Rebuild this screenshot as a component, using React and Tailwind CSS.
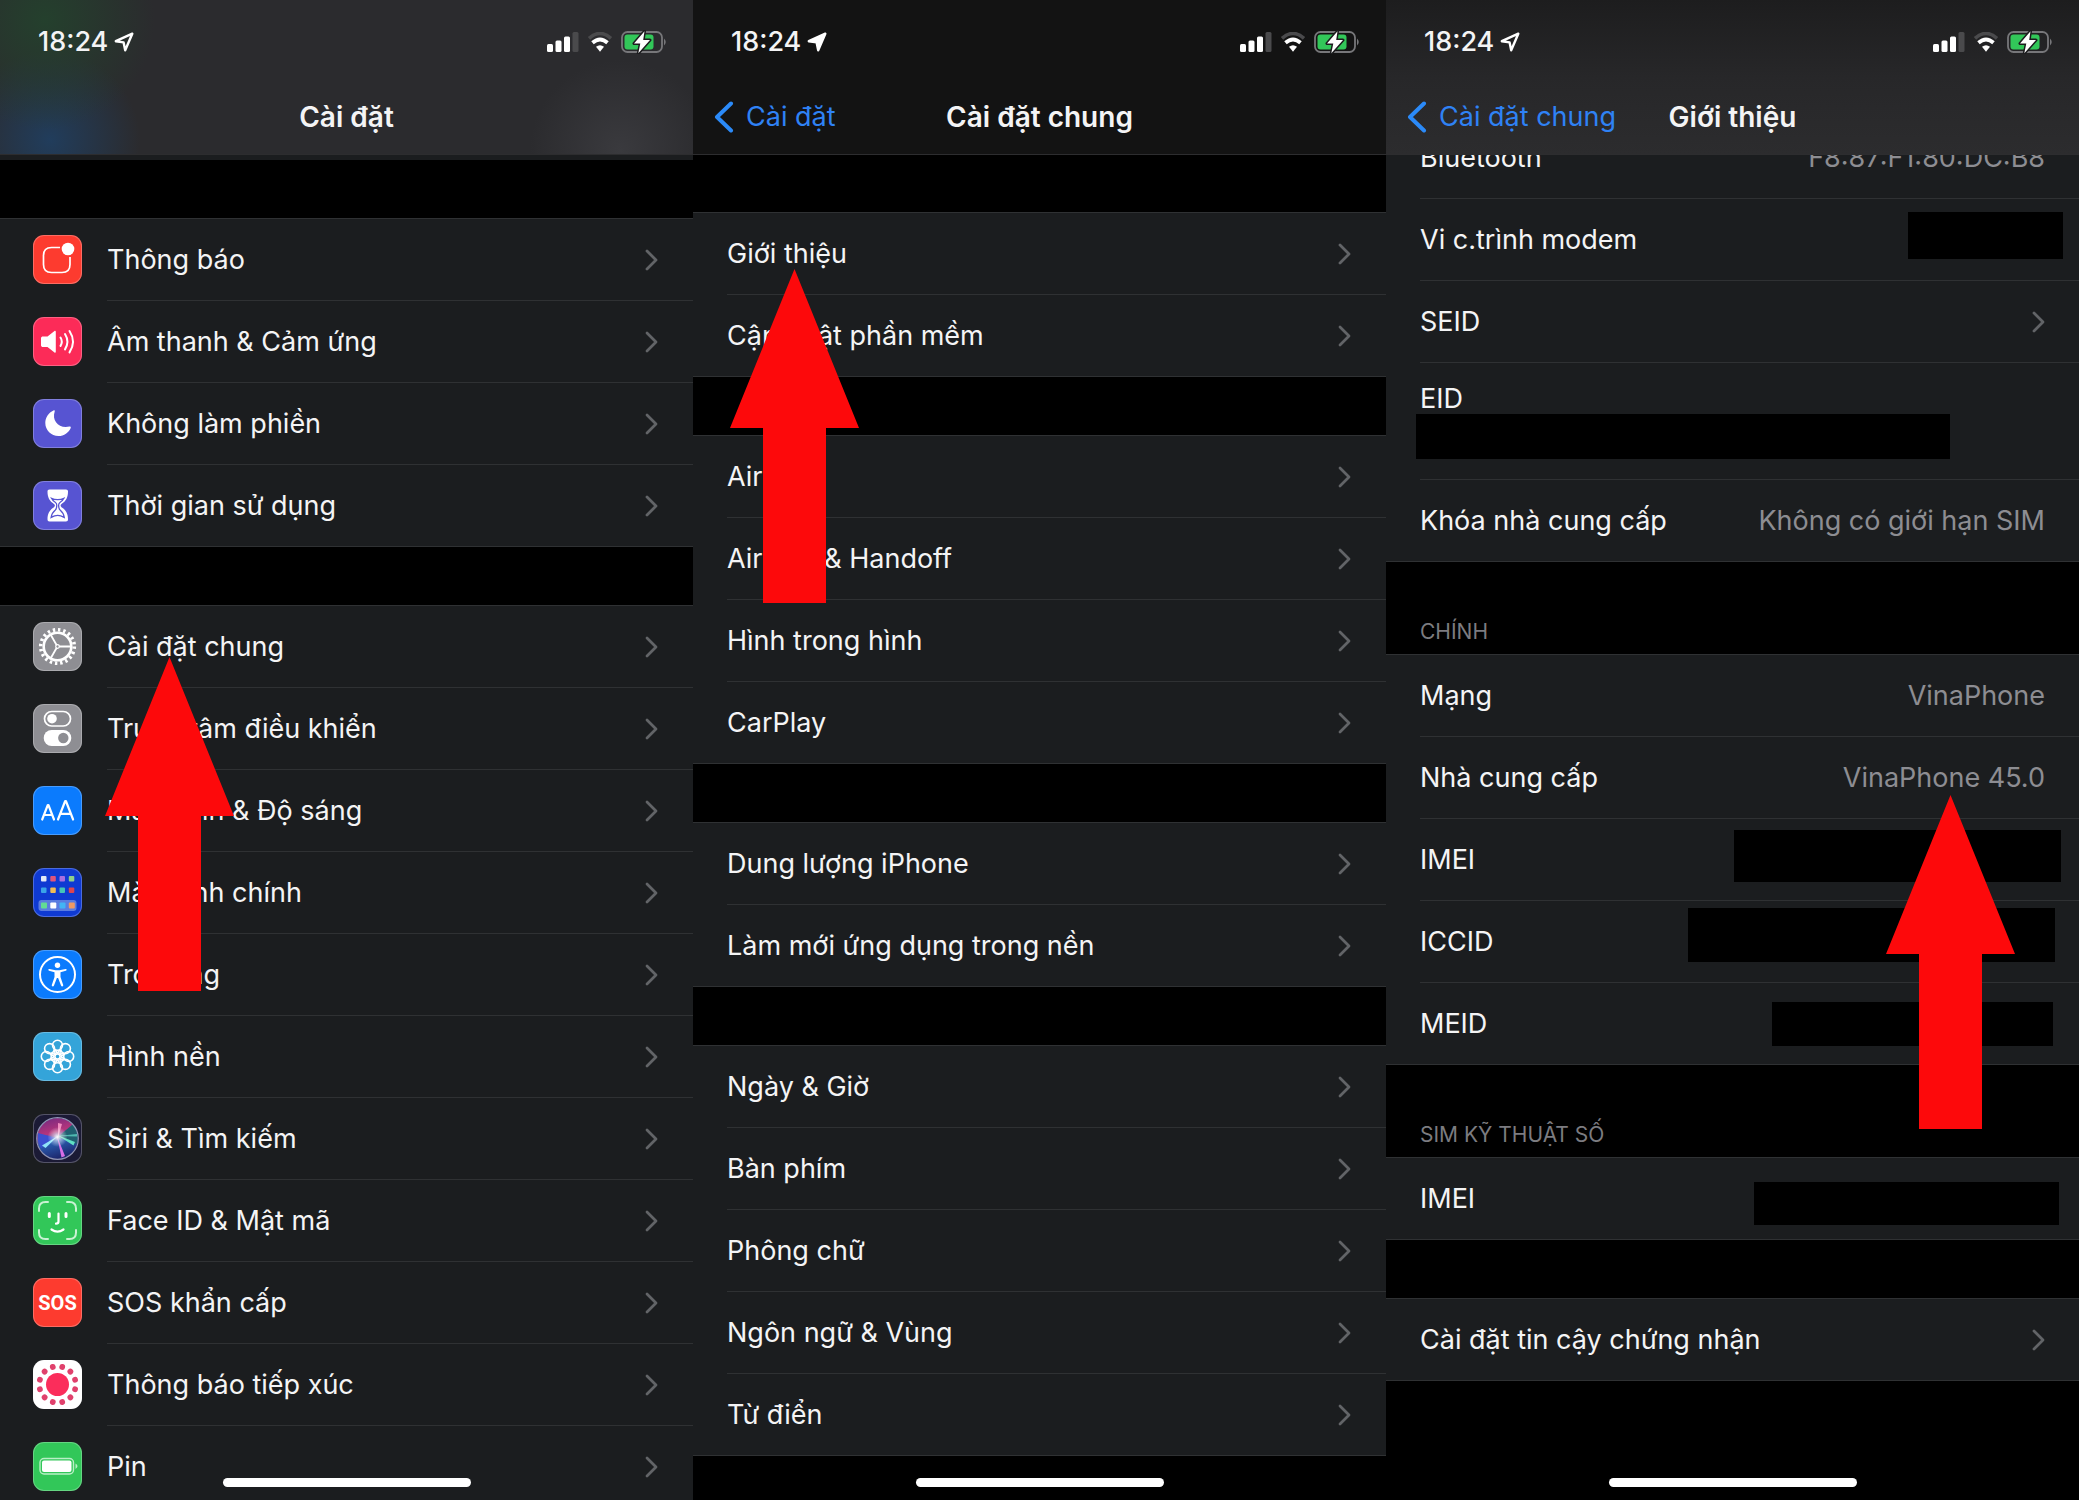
import clsx from "clsx";

const APP_ICONS = {
  notifications: {
    bg: "bg-[#fd3b2f]",
    art: (
      <>
        <path
          d="M27 12.5H18.500c-5 0-8 3-8 8v9c0 5 3 8 8 8h10.500c5 0 8-3 8-8V22"
          fill="none"
          stroke="#fff"
          strokeWidth="1.700"
        />
        <circle cx="35" cy="14" r="6.300" fill="#fff" />
      </>
    ),
  },
  sounds: {
    bg: "bg-[#fc2b58]",
    art: (
      <>
        <path
          d="M10 19.500h4.500L21.500 14c.6-.5 1.300-.2 1.300.7v20c0 .9-.7 1.200-1.300.7L14.500 30H10c-1.200 0-2-.7-2-1.800v-7c0-1.100.8-1.700 2-1.700z"
          fill="#fff"
        />
        <path
          d="M27.500 20.500q2.600 4.200 0 8.400M32 17q4.800 7.700 0 15.400M36.500 14q7 10.700 0 21.400"
          fill="none"
          stroke="#fff"
          strokeWidth="2"
          strokeLinecap="round"
        />
      </>
    ),
  },
  moon: {
    bg: "bg-[#5754d2]",
    art: (
      <path
        d="M20.500 11.500c.8-.4 1.500.1 1.200 1-3.200 9.500 4.500 17.500 14.800 15 .9-.2 1.600.5 1.200 1.400C35.700 33.500 31 37 25.500 37 18.200 37 12.300 31.200 12.300 24c0-5.400 3.300-10.300 8.200-12.500z"
        fill="#fff"
      />
    ),
  },
  hourglass: {
    bg: "bg-[#5754d2]",
    art: (
      <>
        <path
          d="M16.500 8.500h16.500c1.300 0 2 .7 2 2 0 6-2 9.500-6.500 12.500-1.200.9-1.200 2.300 0 3.200C33 29 35 32.500 35 38.500c0 1.300-.7 2-2 2H16.500c-1.300 0-2-.7-2-2 0-6 2-9.500 6.500-12.300 1.200-.9 1.200-2.300 0-3.200-4.500-3-6.500-6.500-6.500-12.500 0-1.300.7-2 2-2z"
          fill="#fff"
        />
        <path
          d="M18.500 17.300c2 1 3.800 1.300 6.200 1.300s4.200-.3 6.200-1.300c-.8 1.800-2.400 3.200-4 4.200-1.100.7-1.300 1.500-1.300 3 0 2.500.4 3.500 1.500 4.500 2 1.700 3.600 3.400 4.200 7.500-2-1.200-3.600-2.200-6.600-2.200s-4.600 1-6.600 2.200c.6-4.100 2.200-5.800 4.200-7.500 1.100-1 1.500-2 1.500-4.500 0-1.500-.2-2.300-1.300-3-1.600-1-3.200-2.400-4-4.200z"
          fill="none"
          stroke="#5754d2"
          strokeWidth="1.300"
        />
      </>
    ),
  },
  gear: {
    bg: "bg-[#8e8e93]",
    art: (
      <g fill="none" stroke="#fff">
        <circle cx="24.500" cy="24.500" r="13.800" strokeWidth="2.600" />
        <circle
          cx="24.500"
          cy="24.500"
          r="16.800"
          strokeWidth="3.600"
          strokeDasharray="2.400 2.878"
        />
        <path
          d="M26 24.500h12M23.700 23.200l-6-10.400M23.700 25.800l-6 10.400"
          strokeWidth="1.800"
        />
        <circle cx="24.500" cy="24.500" r="1.800" strokeWidth="1.200" />
      </g>
    ),
  },
  toggles: {
    bg: "bg-[#8e8e93]",
    art: (
      <>
        <rect
          x="11.500"
          y="7.500"
          width="26"
          height="14.500"
          rx="7.250"
          fill="none"
          stroke="#fff"
          strokeWidth="1.700"
        />
        <circle cx="19" cy="14.700" r="4.800" fill="#fff" />
        <rect x="10.700" y="26" width="27.600" height="16" rx="8" fill="#fff" />
        <circle cx="30.300" cy="34" r="5.200" fill="#8e8e93" />
      </>
    ),
  },
  display: {
    bg: "bg-[#0b7bfd]",
    art: (
      <g
        fill="none"
        stroke="#fff"
        strokeWidth="2.200"
        strokeLinecap="round"
        strokeLinejoin="round"
      >
        <path d="M9.200 33.500l5.600-14.500h.6l5.600 14.500M11 29h8" />
        <path d="M25 33.500l7.200-18.500h.7l7.200 18.500M27.500 27.800h10" />
      </g>
    ),
  },
  home: {
    bg: "bg-[#0f3ad2]",
    art: (
      <>
        <rect x="5.500" y="32" width="38" height="11" rx="3" fill="#5a7ce0" />
        <rect x="8" y="8" width="5.500" height="5.500" rx="1" fill="#e3e8f6" />
        <rect x="17.300" y="8" width="5.500" height="5.500" rx="1" fill="#e0557c" />
        <rect x="26.500" y="8" width="5.500" height="5.500" rx="1" fill="#a96ee0" />
        <rect x="35.800" y="8" width="5.500" height="5.500" rx="1" fill="#8fd08a" />
        <rect x="8" y="19.500" width="5.500" height="5.500" rx="1" fill="#3aa4e8" />
        <rect x="17.300" y="19.500" width="5.500" height="5.500" rx="1" fill="#efbc55" />
        <rect x="26.500" y="19.500" width="5.500" height="5.500" rx="1" fill="#43c6b8" />
        <rect x="35.800" y="19.500" width="5.500" height="5.500" rx="1" fill="#dc4550" />
        <rect x="8" y="34.500" width="6" height="6" rx="1" fill="#62dc94" />
        <rect x="17.300" y="34.500" width="6" height="6" rx="1" fill="#fff" />
        <rect x="26.500" y="34.500" width="6" height="6" rx="1" fill="#42b4f4" />
        <rect x="35.800" y="34.500" width="6" height="6" rx="1" fill="#ee9a63" />
      </>
    ),
  },
  accessibility: {
    bg: "bg-[#0b7bfd]",
    art: (
      <>
        <circle
          cx="24.500"
          cy="24.500"
          r="17.500"
          fill="none"
          stroke="#fff"
          strokeWidth="2"
        />
        <circle cx="24.500" cy="15.200" r="2.700" fill="#fff" />
        <path
          d="M16.500 19l6 1.300h4l6-1.300c1.500-.2 1.700 1.400.4 1.800l-5.400 1.500v4.700l2.700 8c.4 1.400-1.500 2-2.100.7l-3-7.700h-1.200l-3 7.700c-.6 1.300-2.500.7-2.100-.7l2.700-8v-4.700l-5.400-1.500c-1.300-.4-1.100-2 .4-1.800z"
          fill="#fff"
        />
      </>
    ),
  },
  wallpaper: {
    bg: "bg-[#34a4d9]",
    art: (
      <g fill="none" stroke="#fff" strokeWidth="1.600">
        {[0, 45, 90, 135, 180, 225, 270, 315].map((deg) => (
          <g key={deg} transform={`rotate(${deg} 24.500 24.500)`}>
            <circle cx="24.500" cy="13.300" r="5" />
            <path d="M24.500 21.500l-2.400-4M24.500 21.500l2.400-4" />
          </g>
        ))}
        <circle cx="24.500" cy="24.500" r="2.600" />
      </g>
    ),
  },
  siri: {
    bg: "bg-[#1b1a35]",
    art: (
      <>
        <defs>
          <linearGradient id="siriOrb" x1="0.3" y1="0" x2="0.6" y2="1">
            <stop offset="0" stopColor="#7a2a80" />
            <stop offset="0.35" stopColor="#b5357c" />
            <stop offset="0.55" stopColor="#2b5fb4" />
            <stop offset="1" stopColor="#1b2266" />
          </linearGradient>
          <radialGradient id="siriCore">
            <stop offset="0" stopColor="#fff" />
            <stop offset="0.4" stopColor="#fff" stopOpacity="0.5" />
            <stop offset="1" stopColor="#fff" stopOpacity="0" />
          </radialGradient>
        </defs>
        <circle cx="24.500" cy="24.500" r="20.500" fill="url(#siriOrb)" />
        <path d="M25 23l15-13a21 21 0 0 1 4 20z" fill="#1f5f70" />
        <path d="M24 24L5 19a20 20 0 0 0 3 15z" fill="#3b4fd0" />
        <path d="M25 22L9 31.500l3.500 2.500z" fill="#8fe4f8" />
        <path d="M24 21l18 7-1.500 3.500z" fill="#5fe0c4" />
        <path d="M24 22l20-2v2.500z" fill="#4fb8b0" />
        <path d="M24 22l4.500 21.500 3.500-1.500z" fill="#d76ee6" />
        <path d="M25 24L25 9l4 1z" fill="#f08cc0" />
        <circle cx="24.500" cy="23" r="10" fill="url(#siriCore)" />
        <circle
          cx="24.500"
          cy="24.500"
          r="20.800"
          fill="none"
          stroke="#8f93b4"
          strokeWidth="1.200"
        />
      </>
    ),
  },
  faceid: {
    bg: "bg-[#32c759]",
    art: (
      <g fill="none" stroke="#fff" strokeLinecap="round" strokeWidth="2.200">
        <path
          d="M6 15v-2.500C6 8.500 8.500 6 12.500 6H15M34 6h2.500C40.500 6 43 8.500 43 12.500V15M43 34v2.500c0 4-2.500 6.500-6.500 6.500H34M15 43h-2.500C8.500 43 6 40.500 6 36.500V34"
          stroke="#c9f2d3"
          strokeWidth="2"
        />
        <path d="M16.300 17.500v3M33 17.500v3" strokeWidth="3" />
        <path d="M25.500 17.500v8c0 1.500-.8 2.200-2.500 2.200M18.500 33.500q6 4.400 12 0" />
      </g>
    ),
  },
  sos: {
    bg: "bg-[#fd3b2f]",
    art: (
      <text
        x="24.500"
        y="32"
        textAnchor="middle"
        fill="#fff"
        fontFamily="'Liberation Sans Narrow', Roboto, sans-serif"
        fontSize="20"
        fontWeight="700"
      >
        SOS
      </text>
    ),
  },
  exposure: {
    bg: "bg-white",
    art: (
      <g fill="#fb2d5b">
        <circle cx="24.500" cy="24.500" r="11.500" />
        {[15, 45, 75, 105, 135, 165, 195, 225, 255, 285, 315, 345].map((deg) => (
          <circle
            key={deg}
            cx="24.500"
            cy="6.300"
            r="2.900"
            fill="#e0416c"
            transform={`rotate(${deg} 24.500 24.500)`}
          />
        ))}
      </g>
    ),
  },
  battery: {
    bg: "bg-[#32c759]",
    art: (
      <>
        <rect
          x="7"
          y="16.500"
          width="33.500"
          height="15.500"
          rx="4"
          fill="none"
          stroke="#b9efc6"
          strokeWidth="1.400"
        />
        <rect x="9" y="18.500" width="29.500" height="11.500" rx="2" fill="#fff" />
        <path d="M42.500 21.500q4 2.700 0 5.400z" fill="#b9efc6" />
      </>
    ),
  },
};

const SETTINGS_GROUPS = [
  [
    { icon: "notifications", label: "Thông báo" },
    { icon: "sounds", label: "Âm thanh & Cảm ứng" },
    { icon: "moon", label: "Không làm phiền" },
    { icon: "hourglass", label: "Thời gian sử dụng" },
  ],
  [
    { icon: "gear", label: "Cài đặt chung" },
    { icon: "toggles", label: "Trung tâm điều khiển" },
    { icon: "display", label: "Màn hình & Độ sáng" },
    { icon: "home", label: "Màn hình chính" },
    { icon: "accessibility", label: "Trợ năng" },
    { icon: "wallpaper", label: "Hình nền" },
    { icon: "siri", label: "Siri & Tìm kiếm" },
    { icon: "faceid", label: "Face ID & Mật mã" },
    { icon: "sos", label: "SOS khẩn cấp" },
    { icon: "exposure", label: "Thông báo tiếp xúc" },
    { icon: "battery", label: "Pin" },
  ],
];

const GENERAL_GROUPS = [
  ["Giới thiệu", "Cập nhật phần mềm"],
  ["AirDrop", "AirPlay & Handoff", "Hình trong hình", "CarPlay"],
  ["Dung lượng iPhone", "Làm mới ứng dụng trong nền"],
  ["Ngày & Giờ", "Bàn phím", "Phông chữ", "Ngôn ngữ & Vùng", "Từ điển"],
];

// mask: size and place of the black box that hides a private value
const ABOUT_ROWS = [
  { label: "Bluetooth", value: "F8:87:F1:80:DC:B8" },
  { label: "Vi c.trình modem", mask: "top-3.5 right-4 h-[47px] w-[155px]" },
  { label: "SEID", link: true },
  { label: "EID", tall: true, mask: "top-[52px] left-[30px] h-[45px] w-[534px]" },
  { label: "Khóa nhà cung cấp", value: "Không có giới hạn SIM" },
];

const MAIN_ROWS = [
  { label: "Mạng", value: "VinaPhone" },
  { label: "Nhà cung cấp", value: "VinaPhone 45.0" },
  { label: "IMEI", mask: "top-3 right-[18px] h-[52px] w-[327px]" },
  { label: "ICCID", mask: "top-2 right-6 h-[54px] w-[367px]" },
  { label: "MEID", mask: "top-5 right-[26px] h-11 w-[281px]" },
];

const ESIM_ROWS = [
  { label: "IMEI", mask: "top-6 right-5 h-[43px] w-[305px]" },
];

function Chevron() {
  return (
    <svg viewBox="0 0 13 22" className="ml-auto h-[22px] w-[13px] shrink-0">
      <path
        d="M2 2l9 9-9 9"
        fill="none"
        stroke="#626467"
        strokeWidth="2.800"
        strokeLinecap="round"
        strokeLinejoin="round"
      />
    </svg>
  );
}

function AppIcon({ name }) {
  const icon = APP_ICONS[name];
  return (
    <span
      className={clsx(
        "size-[49px] shrink-0 overflow-hidden rounded-[11px] ring-1 ring-white/25 ring-inset",
        icon.bg
      )}
    >
      <svg viewBox="0 0 49 49" className="size-full" aria-hidden="true">
        {icon.art}
      </svg>
    </span>
  );
}

function StatusBar({ solid }) {
  return (
    <div className="flex h-[84px] items-center pr-[26px] pl-[38px]">
      <span className="font-medium">18:24</span>
      <svg viewBox="0 0 20 20" className="ml-1.5 size-5" aria-hidden="true">
        <path
          d="M18.300 1.700L1.800 9.200l7.800 1.200 1.600 7.900z"
          fill={solid ? "#fff" : "none"}
          stroke="#fff"
          strokeWidth="2.400"
          strokeLinejoin="round"
        />
      </svg>
      <div className="ml-auto flex items-center gap-2">
        <svg viewBox="0 0 32 20" className="h-5 w-8" aria-hidden="true">
          <rect x="0" y="12" width="6" height="8" rx="1.500" fill="#fff" />
          <rect x="8.500" y="8.500" width="6" height="11.500" rx="1.500" fill="#fff" />
          <rect x="17" y="4.500" width="6" height="15.500" rx="1.500" fill="#fff" />
          <rect x="25.500" y="0" width="6" height="20" rx="1.500" fill="#4a4a4c" />
        </svg>
        <svg viewBox="0 0 26 20" className="h-5 w-[26px]" aria-hidden="true">
          <path
            d="M2 6.300q11-9.600 22 0"
            fill="none"
            stroke="#4a4a4c"
            strokeWidth="3.600"
          />
          <path
            d="M5.500 10.800q7.500-6.500 15 0"
            fill="none"
            stroke="#fff"
            strokeWidth="3.800"
          />
          <path d="M9 14.800q4-3.200 8 0l-4 5z" fill="#fff" />
        </svg>
        <svg viewBox="0 0 46 24" className="h-6 w-[46px]" aria-hidden="true">
          <rect
            x="1"
            y="2"
            width="40"
            height="20"
            rx="5.500"
            fill="none"
            stroke="#77777a"
            strokeWidth="1.800"
          />
          <rect x="3.500" y="4.500" width="29" height="15" rx="3" fill="#32c759" />
          <path d="M43 8.500q3.500 3.500 0 7z" fill="#77777a" />
          <path
            d="M23.500 1.200l-10.500 12.300h6.300l-2 9.800 11.700-13.200h-6.800z"
            fill="#fff"
            stroke="#1c1c1e"
            strokeWidth="3"
            strokeLinejoin="round"
            paintOrder="stroke"
          />
        </svg>
      </div>
    </div>
  );
}

function TopBar({ title, back, solid, className }) {
  return (
    <header
      className={clsx(
        "relative z-10 h-[155px] border-b border-[#2d2d2f]",
        className
      )}
    >
      <StatusBar solid={solid} />
      <div className="grid h-[66px] grid-cols-[1fr_auto_1fr] items-center px-[21px]">
        <div>
          {back && (
            <a href="#back" className="flex items-center gap-3 text-[#2f82f5]">
              <svg viewBox="0 0 20 32" className="h-8 w-5" aria-hidden="true">
                <path
                  d="M17 2.500L3 16l14 13.500"
                  fill="none"
                  stroke="#2b8af8"
                  strokeWidth="4"
                  strokeLinecap="round"
                  strokeLinejoin="round"
                />
              </svg>
              {back}
            </a>
          )}
        </div>
        <h1 className="text-[28px] font-semibold">{title}</h1>
      </div>
    </header>
  );
}

function Group({ children }) {
  return (
    <ul className="border-y border-[#2f3133] bg-[#1b1d1f]">{children}</ul>
  );
}

function LinkRow({ icon, label, first }) {
  return (
    <li>
      <a href="#open" className={clsx("flex", icon ? "pl-[33px]" : "pl-[34px]")}>
        {icon && (
          <span className="flex items-center pr-[25px]">
            <AppIcon name={icon} />
          </span>
        )}
        <span
          className={clsx(
            "flex flex-1 items-center pr-[35px]",
            first ? "h-[81px]" : "h-[82px] border-t border-[#2f3133]"
          )}
        >
          {label}
          <Chevron />
        </span>
      </a>
    </li>
  );
}

function InfoRow({ label, value, mask, link, tall, first }) {
  return (
    <li className="relative pl-[34px]">
      <div
        className={clsx(
          "flex pr-[34px]",
          tall ? "h-[117px] items-start pt-[18px]" : "items-center",
          !tall && (first ? "h-[81px]" : "h-[82px]"),
          !first && "border-t border-[#2f3133]"
        )}
      >
        {label}
        {value && <span className="ml-auto text-[#8d8d92]">{value}</span>}
        {link && <Chevron />}
      </div>
      {mask && <span className={clsx("absolute bg-black", mask)} />}
    </li>
  );
}

function SectionTitle({ children }) {
  return (
    <h2 className="flex h-[92px] items-end px-[34px] pb-1 text-[21px] text-[#7c7c80]">
      {children}
    </h2>
  );
}

function RedArrow({ className }) {
  return (
    <svg
      viewBox="0 0 129 334"
      className={clsx("absolute z-20 h-[334px] w-[129px]", className)}
      aria-hidden="true"
    >
      <path d="M64.500 0L129 159H96v175H33V159H0z" fill="#fd090b" />
    </svg>
  );
}

function Screen({ children }) {
  return (
    <section className="relative h-screen min-w-0 flex-1 overflow-hidden">
      {children}
      <div className="absolute inset-x-0 bottom-[13px] z-10 flex justify-center">
        <span className="h-[9px] w-[248px] rounded-full bg-white" />
      </div>
    </section>
  );
}

export default function App() {
  return (
    <main className="flex bg-black font-['Inter','Liberation_Sans',sans-serif] text-[27px] leading-9 whitespace-nowrap text-[#f4f4f5]">
      <Screen>
        <TopBar
          title="Cài đặt"
          className="bg-[#2b2b2e] bg-[radial-gradient(circle_at_45px_20px,#24402d_0px,transparent_110px),radial-gradient(circle_at_50px_140px,#213d5c_0px,transparent_90px),radial-gradient(circle_at_620px_150px,#3a3a3e_0px,transparent_90px)]"
        />
        <div className="h-[5px] bg-[#1b1d1f]" />
        <div className="flex flex-col gap-[58px] pt-[58px]">
          {SETTINGS_GROUPS.map((rows, i) => (
            <Group key={i}>
              {rows.map((row, j) => (
                <LinkRow key={row.label} {...row} first={j === 0} />
              ))}
            </Group>
          ))}
        </div>
        <RedArrow className="top-[657px] left-[105px]" />
      </Screen>

      <Screen>
        <TopBar title="Cài đặt chung" back="Cài đặt" solid className="bg-[#131313]" />
        <div className="flex flex-col gap-[58px] pt-[57px]">
          {GENERAL_GROUPS.map((rows, i) => (
            <Group key={i}>
              {rows.map((label, j) => (
                <LinkRow key={label} label={label} first={j === 0} />
              ))}
            </Group>
          ))}
        </div>
        <RedArrow className="top-[269px] left-[37px]" />
      </Screen>

      <Screen>
        <TopBar
          title="Giới thiệu"
          back="Cài đặt chung"
          className="bg-linear-to-b from-[#1d1d1e] via-[#272729] to-[#2c2c2e]"
        />
        {/* scrolled: the first row starts under the top bar */}
        <div className="-mt-[39px]">
          <Group>
            {ABOUT_ROWS.map((row, i) => (
              <InfoRow key={row.label} {...row} first={i === 0} />
            ))}
          </Group>
          <SectionTitle>CHÍNH</SectionTitle>
          <Group>
            {MAIN_ROWS.map((row, i) => (
              <InfoRow key={row.label} {...row} first={i === 0} />
            ))}
          </Group>
          <SectionTitle>SIM KỸ THUẬT SỐ</SectionTitle>
          <Group>
            {ESIM_ROWS.map((row) => (
              <InfoRow key={row.label} {...row} first />
            ))}
          </Group>
          <div className="pt-[58px]">
            <Group>
              <InfoRow label="Cài đặt tin cậy chứng nhận" link first />
            </Group>
          </div>
        </div>
        <RedArrow className="top-[795px] left-[500px]" />
      </Screen>
    </main>
  );
}
